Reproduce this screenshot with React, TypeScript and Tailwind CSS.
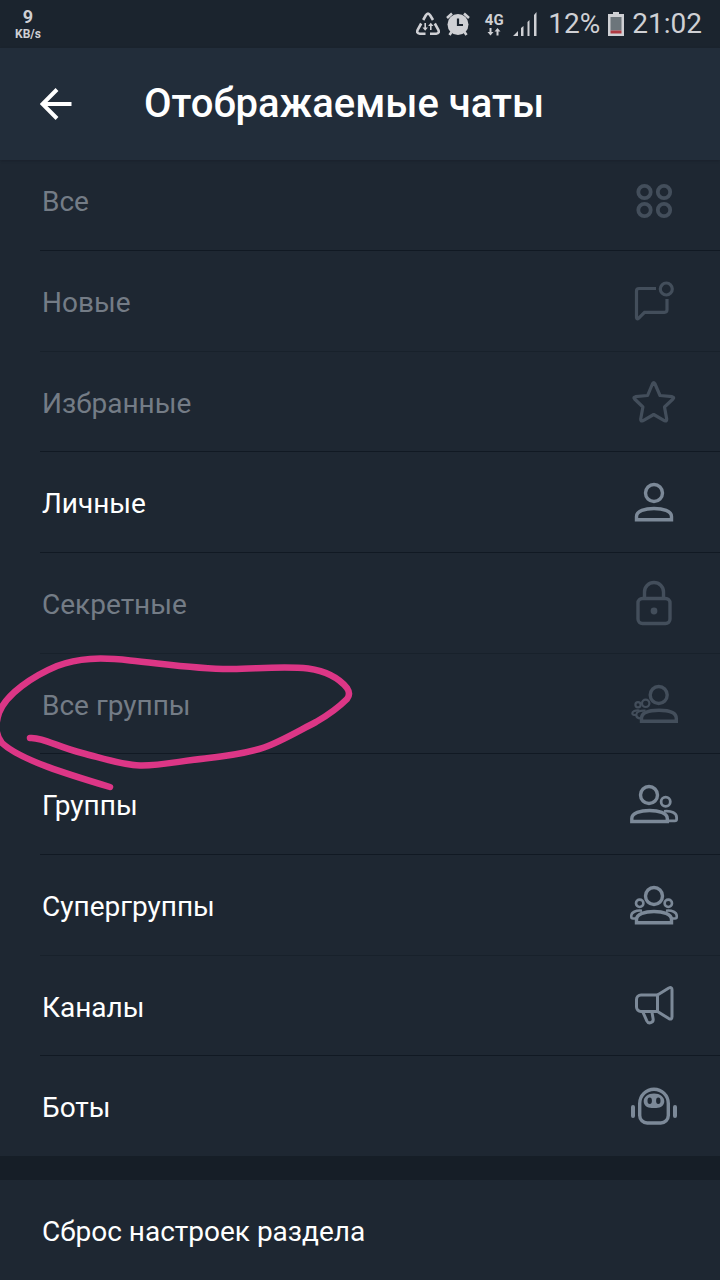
import React from 'react';

interface ChatFilter {
  label: string;
  icon: React.ReactNode;
  enabled?: boolean;
}

const FILTERS: ChatFilter[] = [
  {
    label: 'Все',
    icon: (
      <g strokeWidth="3.8">
        <circle cx="14.5" cy="16" r="6.2" />
        <circle cx="34" cy="16" r="6.2" />
        <circle cx="14.5" cy="34" r="6.2" />
        <circle cx="34" cy="34" r="6.2" />
      </g>
    ),
  },
  {
    label: 'Новые',
    icon: (
      <g strokeWidth="3.2">
        <path d="M26 11.5H9A2.5 2.5 0 0 0 6.5 14v26.5c0 1.5 1 1.8 2 .8l6-6H34.5a2.5 2.5 0 0 0 2.5-2.5V22" />
        <circle cx="36.3" cy="12" r="6" />
      </g>
    ),
  },
  {
    label: 'Избранные',
    icon: (
      <path
        strokeWidth="3.2"
        strokeLinejoin="round"
        d="M22.6 5.5q1.1-1.8 2.2 0L30 17.5l12.2 1.2q2.5.5.8 2.3L34.5 29l2.2 12q.2 2.5-2 1.8L23.7 36.5 12.7 42.8q-2.2.7-2-1.8l2.2-12L4.6 21q-1.7-1.8.8-2.3l12.2-1.2z"
      />
    ),
  },
  {
    label: 'Личные',
    enabled: true,
    icon: (
      <g>
        <circle cx="24" cy="15" r="8.5" />
        <path d="M6.5 41.7V38.5C6.5 33 15 30.5 24 30.5S41.5 33 41.5 38.5v3.2z" />
      </g>
    ),
  },
  {
    label: 'Секретные',
    icon: (
      <g>
        <rect x="8" y="19.5" width="32" height="25" rx="4.5" />
        <path d="M14.5 19.5V13a9.5 9.5 0 0 1 19 0v6.5" />
        <circle cx="24" cy="32" r="3.4" fill="currentColor" stroke="none" />
      </g>
    ),
  },
  {
    label: 'Все группы',
    icon: (
      <g>
        <circle cx="28.7" cy="15" r="8.5" />
        <path d="M11.5 41.3V38.5C11.5 32.5 20 30.3 29 30.3S46.3 32.5 46.3 38.5v2.8z" />
        <g strokeWidth="2.2">
          <circle cx="15.7" cy="23.3" r="3.7" />
          <circle cx="8" cy="24.7" r="2.6" />
          <path d="M15.5 30.7C10 30.3 6.5 32 6.3 34.5S8.5 38.3 11 38.5" />
          <path d="M9.5 30.5C5 30 2.3 31.5 2.3 33.3S4 35 6 35" />
        </g>
      </g>
    ),
  },
  {
    label: 'Группы',
    enabled: true,
    icon: (
      <g>
        <circle cx="19" cy="15" r="8.5" />
        <path d="M1.8 41.5V38.5C1.8 33 10.5 30.5 19.5 30.5S37.3 33 37.3 38.5v3z" />
        <g strokeWidth="2.8">
          <circle cx="35.7" cy="21.8" r="4.6" />
          <path d="M34 31.3C42 30.5 46.6 33.5 46.6 37.5v1.8c0 1-.6 1.6-1.8 1.6h-7" />
        </g>
      </g>
    ),
  },
  {
    label: 'Супергруппы',
    enabled: true,
    icon: (
      <g>
        <circle cx="24" cy="15" r="8.5" />
        <path d="M6.5 41.7V38.5C6.5 33 15 30.5 24 30.5S41.5 33 41.5 38.5v3.2z" />
        <g strokeWidth="2.6">
          <circle cx="9.7" cy="22.3" r="3.7" />
          <circle cx="38.3" cy="22.3" r="3.7" />
          <path d="M12 29.7C5.5 29 1.5 31.5 1.3 34.5v1.5c0 1 .5 1.5 1.7 1.5h3" />
          <path d="M36 29.7c6.5-.7 10.5 1.8 10.7 4.8v1.5c0 1-.5 1.5-1.7 1.5h-3" />
        </g>
      </g>
    ),
  },
  {
    label: 'Каналы',
    enabled: true,
    icon: (
      <g strokeLinejoin="round" strokeWidth="3">
        <path d="M27.5 13H11a4.5 4.5 0 0 0-4.5 4.5v7.5a4.5 4.5 0 0 0 4.5 4.5h16.5z" />
        <path d="M27.5 13 38.8 6q3.2-1.4 3.2 1.800v27q0 3.200-3.200 1.800L27.5 29.5" />
        <path d="m12.8 29.8 4 9c1.8 3.7 7 2 6.300-2l-1.200-7" />
      </g>
    ),
  },
  {
    label: 'Боты',
    enabled: true,
    icon: (
      <g>
        <path d="M9.7 21.5a14.3 14.3 0 0 1 28.6 0V33.5a7.5 7.5 0 0 1-7.5 7.5H17.2a7.5 7.5 0 0 1-7.5-7.5z" />
        <path d="M3 25v9M45 25v9" strokeWidth="4" strokeLinecap="round" />
        <path
          fill="currentColor"
          stroke="none"
          d="M24 11.5c6 0 10.3 3.5 10.3 7.8s-3.5 6.7-8 6.7h-4.6c-4.5 0-8-2.4-8-6.7s4.3-7.8 10.3-7.8z"
        />
        <ellipse cx="19.7" cy="18.7" rx="2.2" ry="3.2" fill="#1e2732" stroke="none" />
        <ellipse cx="28.3" cy="18.7" rx="2.2" ry="3.2" fill="#1e2732" stroke="none" />
      </g>
    ),
  },
];

const StatusBar: React.FC = () => (
  <div className="flex h-12 items-center justify-between bg-[#1b242e] pr-[18px] pl-[15px] text-[#cfd0d4]">
    <div className="flex flex-col items-center font-bold">
      <span className="text-[18px] leading-5">9</span>
      <span className="text-[12px] leading-[14px]">KB/s</span>
    </div>
    <div className="flex items-center">
      <svg className="mr-[6px] h-6 w-6" viewBox="0 0 24 24" fill="none" stroke="currentColor" strokeWidth="2.6" aria-hidden="true">
        <path d="M7.2 8 9.7 3.5q2.3-3.8 4.6 0L17 8" />
        <path d="M5.2 11.5 1.8 17.5q-1.8 4 2 4.2H9.5" />
        <path d="M18.8 11.5l3.4 6q1.8 4-2 4.2H14" />
        <path d="M9.2 11v6M14.8 18v-6" strokeWidth="1.6" />
        <path d="M6.5 15.5h5.4l-2.7 3.2zM12.1 14h5.4l-2.7-3.2z" fill="currentColor" stroke="none" />
      </svg>
      <svg className="mr-[13px] h-6 w-6" viewBox="0 0 24 24" fill="currentColor" aria-hidden="true">
        <circle cx="12" cy="12.5" r="10.5" />
        <path d="M1 6 6 1.5M23 6l-5-4.5M5.5 20 3.5 23M18.5 20l2 3" stroke="currentColor" strokeWidth="2.6" />
        <path d="M12 6.5v6.5h5" fill="none" stroke="#1b242e" strokeWidth="2.2" />
      </svg>
      <div className="mr-[8px] flex w-[22px] flex-col items-center">
        <span className="text-[15px] leading-[14px] font-bold">4G</span>
        <svg className="h-[9px] w-[14px]" viewBox="0 0 14 9" fill="currentColor" aria-hidden="true">
          <path d="M2.5 1h2v4h2l-3 3.5-3-3.5h2zM9.5 8.5h2v-4h2l-3-3.5-3 3.5h2z" />
        </svg>
      </div>
      <svg className="mr-[11px] h-6 w-6" viewBox="0 0 24 24" fill="currentColor" aria-hidden="true">
        <path d="M0 24l5-5v5zM8 16l2.5-2v10H8zM14.5 10l2-2v16h-2zM21 3l2.5-3v24H21z" />
      </svg>
      <span className="text-[28px] leading-8">12%</span>
      <svg className="mx-[8px] h-6 w-4" viewBox="0 0 16 24" aria-hidden="true">
        <path d="M5 0h6v2h5v22H0V2h5z" fill="currentColor" />
        <path d="M2.5 5h11v13.5h-11z" fill="#6c757b" />
        <path d="M2.5 18.5h11v3h-11z" fill="#b03a42" />
      </svg>
      <span className="text-[28px] leading-8">21:02</span>
    </div>
  </div>
);

const FilterRow: React.FC<ChatFilter> = ({ label, icon, enabled }) => (
  <li className="ml-10 h-[101px] border-b border-[#111923] last:h-[100px] last:border-b-0 nth-[3n]:h-[100px] nth-[3n+2]:border-[#18212b]">
    <button type="button" className="flex h-full w-full items-center justify-between pr-[42px] pl-[2px] text-left">
      <span className={enabled ? 'pt-1 text-white' : 'pt-1 text-[#747c86]'}>{label}</span>
      <svg
        className={enabled ? 'h-12 w-12 text-[#7c8998]' : 'h-12 w-12 text-[#434e5b]'}
        viewBox="0 0 48 48"
        fill="none"
        stroke="currentColor"
        strokeWidth="3.4"
        aria-hidden="true"
      >
        {icon}
      </svg>
    </button>
  </li>
);

export default function App() {
  return (
    <div className="relative min-h-screen overflow-hidden bg-[#1e2732] font-['Roboto',sans-serif]">
      <StatusBar />
      <header className="relative z-10 flex h-28 items-center bg-[#222d3a] pl-10 shadow-sm">
        <button type="button" aria-label="Назад" className="mr-[72px] text-white">
          <svg className="h-8 w-8" viewBox="0 0 32 32" fill="none" stroke="currentColor" strokeWidth="4" aria-hidden="true">
            <path d="M17 1.5 2.5 16 17 30.5M2.5 16H31.5" />
          </svg>
        </button>
        <h1 className="text-[40px] leading-[48px] font-medium text-white">Отображаемые чаты</h1>
      </header>

      <main className="text-[28px] leading-9">
        {/* the list is scrolled slightly under the header */}
        <ul className="-mt-2.5">
          {FILTERS.map(filter => (
            <FilterRow key={filter.label} {...filter} />
          ))}
        </ul>
        <div className="h-6 bg-[#161e27]" />
        <button type="button" className="flex h-[100px] w-full items-center pt-1 pl-[42px] text-left text-white">
          Сброс настроек раздела
        </button>
      </main>

      <svg
        className="pointer-events-none absolute top-[640px] left-0 z-20 h-[160px] w-[370px]"
        viewBox="0 0 370 160"
        fill="none"
        stroke="#dc3686"
        strokeWidth="6.5"
        strokeLinecap="round"
        strokeLinejoin="round"
        aria-hidden="true"
      >
        <path d="M30 98C42 97 58 107 82 113C105 119 122 125 140 125.5C160 126 180 121 205 118.5C228 116 248 113 264 107.5C282 101 300 90 316 82C330 74 341 65 347 59Q351 54 347 48C339 38 325 31 308 28.5C285 26 260 28.5 232 29C200 29.5 165 24 130 20.5C100 17 78 18 57 26C33 36 6 54 -1 73C-5 85 -4 96 2 103C20 120 70 135 110 147" />
      </svg>
    </div>
  );
}
